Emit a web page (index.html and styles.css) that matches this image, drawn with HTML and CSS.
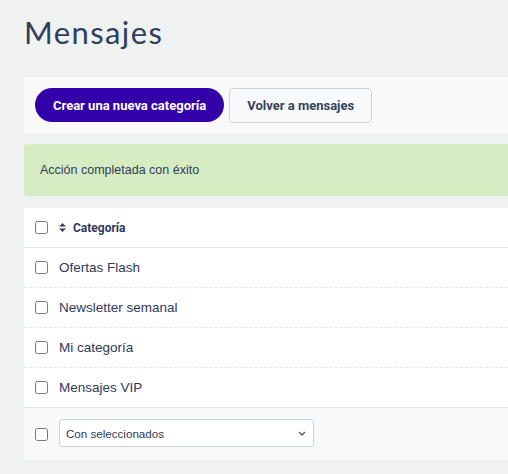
FILE: index.html
```html
<!DOCTYPE html>
<html>
<head>
<meta charset="utf-8">
<title>Mensajes</title>
<link rel="stylesheet" href="styles.css">
</head>
<body>
  <h1 class="page-title">Mensajes</h1>

  <!-- action bar -->
  <div class="toolbar">
    <button class="btn btn-primary" type="button">Crear una nueva categoría</button>
    <button class="btn btn-light" type="button">Volver a mensajes</button>
  </div>

  <div class="alert-success">Acción completada con éxito</div>

  <!-- categories list -->
  <div class="list">
    <div class="row row-head">
      <input type="checkbox">
      <span class="sort-icon">
        <svg width="7" height="9" viewBox="0 0 7 9"><path d="M3.5 0 L7 3.6 H0 Z M3.5 9 L7 5.4 H0 Z" fill="#3a4050"/></svg>
      </span>
      <span class="col-title">Categoría</span>
    </div>
    <div class="row"><input type="checkbox"><span class="cell">Ofertas Flash</span></div>
    <div class="row"><input type="checkbox"><span class="cell">Newsletter semanal</span></div>
    <div class="row"><input type="checkbox"><span class="cell">Mi categoría</span></div>
    <div class="row row-last"><input type="checkbox"><span class="cell">Mensajes VIP</span></div>
    <div class="row row-foot">
      <input type="checkbox">
      <div class="select-box">
        <span>Con seleccionados</span>
        <svg width="8" height="5" viewBox="0 0 8 5"><path d="M1 1 L4 4 L7 1" fill="none" stroke="#555" stroke-width="1.3"/></svg>
      </div>
    </div>
  </div>
</body>
</html>
```

FILE: styles.css
```css
* {
  box-sizing: border-box;
}

body {
  margin: 0;
  padding: 0 0 0 24px;
  background-color: #f0f1f1;
  font-family: "Liberation Sans", Arial, sans-serif;
  font-size: 13px;
  color: #2e3a59;
}

.page-title {
  margin: 0;
  padding: 13px 0 0 0;
  height: 77px;
  font-family: Lato, sans-serif;
  font-weight: 400;
  font-size: 31px;
  letter-spacing: 1.4px;
  color: #2f3e5a;
}

.toolbar {
  display: flex;
  align-items: center;
  gap: 5px;
  height: 56px;
  padding: 0 11px;
  background-color: #f9f9fa;
}

/* buttons use Roboto, the rest of the page Arial */
.btn {
  font-family: Roboto, "Liberation Sans", sans-serif;
  font-size: 13px;
  font-weight: bold;
  cursor: pointer;
}

.btn-primary {
  height: 34px;
  padding: 0 18px;
  border: none;
  border-radius: 17px;
  background-color: #3300aa;
  color: #ffffff;
}

.btn-light {
  height: 35px;
  padding: 0 17px;
  border: 1px solid #c9d4e1;
  border-radius: 4px;
  background-color: #f9fafb;
  color: #34435e;
}

.alert-success {
  margin-top: 11px;
  height: 52px;
  padding: 0 16px;
  display: flex;
  align-items: center;
  background-color: #d8ecc3;
  border-radius: 3px 0 0 3px;
  font-size: 12.5px;
  color: #2e3a59;
}

.list {
  margin-top: 12px;
  background-color: #ffffff;
}

.row {
  display: flex;
  align-items: center;
  height: 40px;
  padding: 0 11px;
  border-bottom: 1px dashed #e4e7ea;
  font-size: 13.5px;
}

.row input[type="checkbox"] {
  margin: 0;
  width: 13px;
  height: 13px;
}

.row-head {
  border-bottom: 1px solid #e2e5e8;
}

.sort-icon {
  display: flex;
  margin-left: 11px;
}

.col-title {
  margin-left: 7px;
  font-family: Roboto, "Liberation Sans", sans-serif;
  font-weight: bold;
  font-size: 12px;
}

.cell {
  margin-left: 11px;
}

.row-last {
  border-bottom: 1px solid #dde3ea;
}

.row-foot {
  height: 52px;
  align-items: flex-start;
  padding-top: 11px;
  border-bottom: none;
  background-color: #f9f9fa;
}

.row-foot input[type="checkbox"] {
  margin-top: 9px;
}

.select-box {
  margin-left: 11px;
  width: 255px;
  height: 28px;
  padding: 0 7px 0 6px;
  display: flex;
  align-items: center;
  justify-content: space-between;
  background-color: #ffffff;
  border: 1px solid #c9d4e1;
  border-radius: 3px;
  font-size: 11.6px;
}
```
